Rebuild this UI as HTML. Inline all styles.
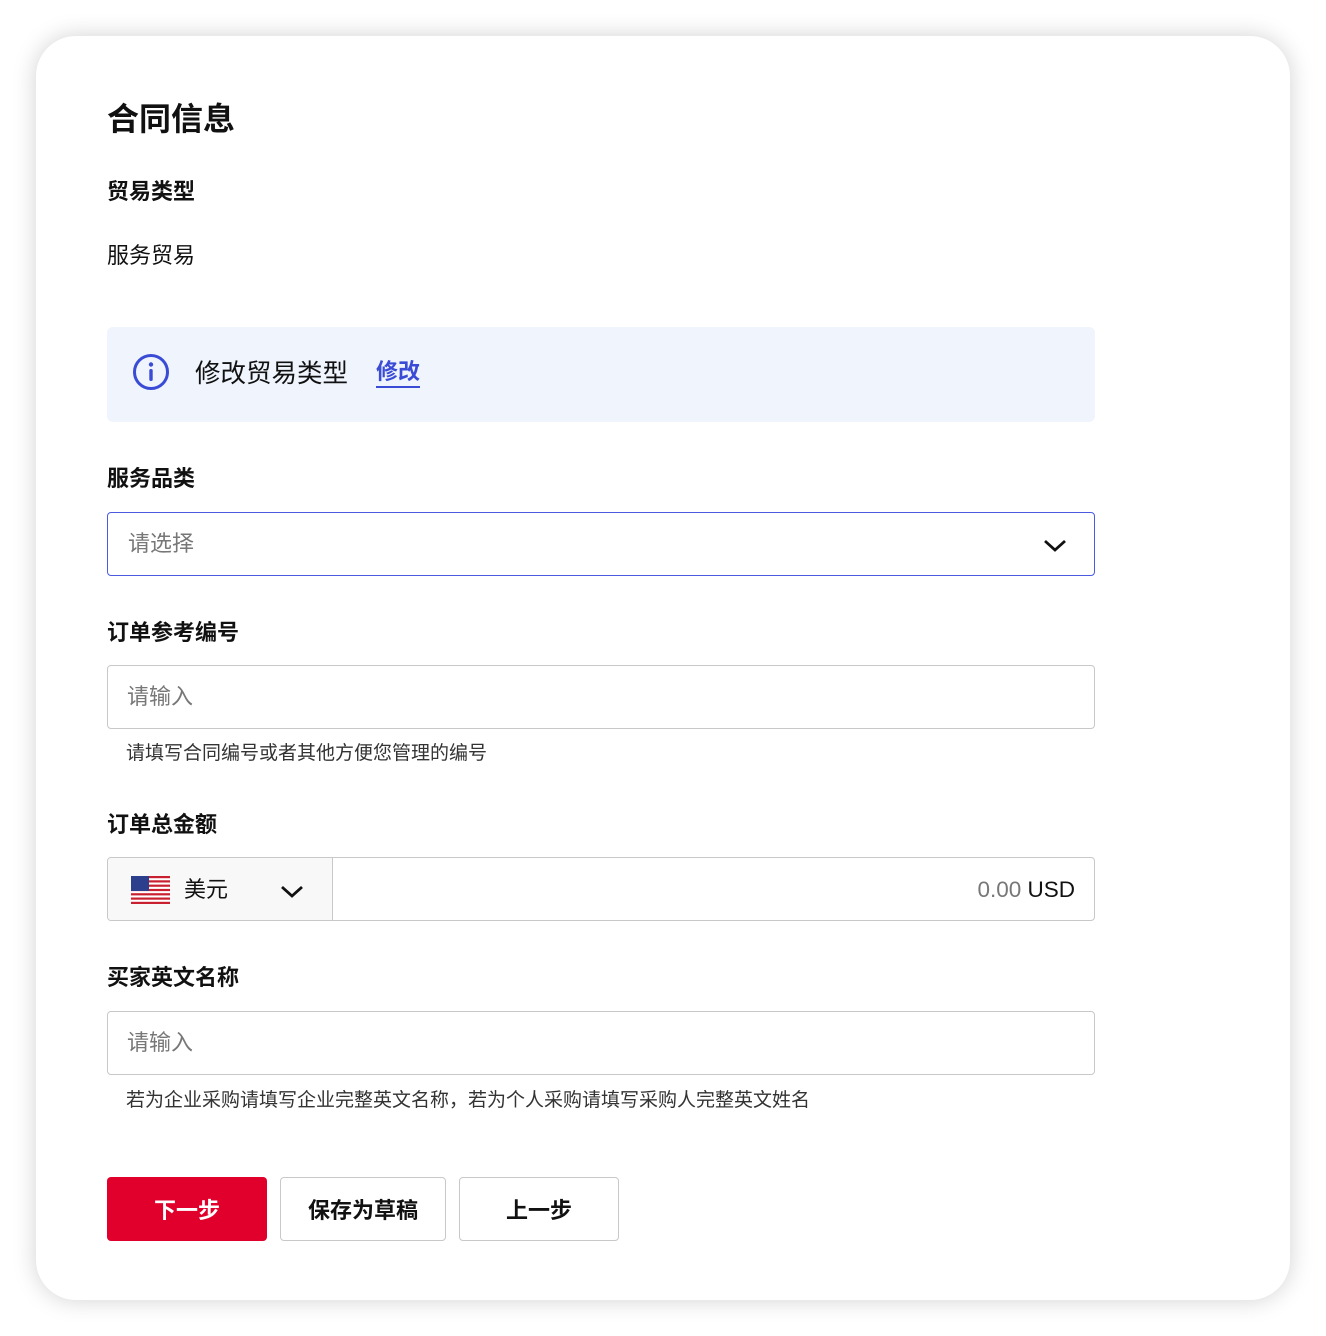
<!DOCTYPE html>
<html><head><meta charset="utf-8"><style>
*{box-sizing:border-box;margin:0;padding:0}
body{width:1326px;height:1336px;background:#fff;font-family:"Liberation Sans","Noto Sans CJK SC",sans-serif;color:#111;position:relative;overflow:hidden}
.card{position:absolute;left:36px;top:36px;width:1254px;height:1264px;background:#fff;border-radius:40px;box-shadow:0 0 24px rgba(0,0,0,.18)}
.a{position:absolute;white-space:nowrap;line-height:1}
.lbl{font-size:22px;font-weight:bold;color:#111}
.box{position:absolute;left:107px;width:988px;height:64px;border:1px solid #c8c8c8;border-radius:4px;background:#fff}
.ph{position:absolute;left:19px;top:20px;font-size:22px;color:#777;line-height:1;white-space:nowrap}
.hint{font-size:19px;color:#333}
.btn{position:absolute;top:1177px;height:64px;border-radius:4px;font-size:22px;font-weight:bold;display:flex;align-items:center;justify-content:center}
</style></head><body>
<div class="card"></div>
<div class="a" style="left:107px;top:103px;font-size:32px;font-weight:bold">合同信息</div>
<div class="a lbl" style="left:107px;top:181px">贸易类型</div>
<div class="a" style="left:107px;top:245px;font-size:22px">服务贸易</div>
<div style="position:absolute;left:107px;top:327px;width:988px;height:95px;background:#eff4fd;border-radius:6px">
<svg style="position:absolute;left:25px;top:26px" width="38" height="38" viewBox="0 0 38 38"><circle cx="19" cy="19" r="16.5" fill="none" stroke="#3a4bd6" stroke-width="3"/><circle cx="19" cy="11.5" r="2.2" fill="#3a4bd6"/><rect x="17.3" y="16" width="3.4" height="12" rx="1.5" fill="#3a4bd6"/></svg>
<div class="a" style="left:88px;top:35px;font-size:25.5px;color:#111">修改贸易类型</div>
<div class="a" style="left:269px;top:34px;font-size:22px;font-weight:bold;color:#3a4bd6;border-bottom:2px solid #3a4bd6;padding-bottom:3px">修改</div>
</div>
<div class="a lbl" style="left:107px;top:468px">服务品类</div>
<div class="box" style="top:512px;border-color:#4a5be0"><div class="ph" style="left:20px">请选择</div>
<svg style="position:absolute;left:935px;top:25px" width="24" height="16" viewBox="0 0 24 16"><path d="M2 3l10 9 10-9" fill="none" stroke="#111" stroke-width="2.8"/></svg></div>
<div class="a lbl" style="left:107px;top:622px">订单参考编号</div>
<div class="box" style="top:665px"><div class="ph">请输入</div></div>
<div class="a hint" style="left:126px;top:744px">请填写合同编号或者其他方便您管理的编号</div>
<div class="a lbl" style="left:107px;top:814px">订单总金额</div>
<div class="box" style="top:857px;overflow:hidden">
<div style="position:absolute;left:0;top:0;width:225px;height:62px;background:#f8f8f8;border-right:1px solid #c8c8c8"></div>
<svg style="position:absolute;left:23px;top:18px" width="39" height="28" viewBox="0 0 39 28"><rect width="39" height="28" rx="3" fill="#fff"/><g fill="#c8202f"><rect y="0" width="39" height="2.2"/><rect y="4.3" width="39" height="2.2"/><rect y="8.6" width="39" height="2.2"/><rect y="12.9" width="39" height="2.2"/><rect y="17.2" width="39" height="2.2"/><rect y="21.5" width="39" height="2.2"/><rect y="25.8" width="39" height="2.2"/></g><rect width="18" height="15" fill="#2b3f8c"/></svg>
<div class="a" style="left:76px;top:21px;font-size:22px">美元</div>
<svg style="position:absolute;left:172px;top:26px" width="24" height="16" viewBox="0 0 24 16"><path d="M2 3l10 9 10-9" fill="none" stroke="#111" stroke-width="2.8"/></svg>
<div class="a" style="right:19px;top:21px;font-size:22.5px"><span style="color:#777">0.00</span> USD</div>
</div>
<div class="a lbl" style="left:107px;top:967px">买家英文名称</div>
<div class="box" style="top:1011px"><div class="ph">请输入</div></div>
<div class="a hint" style="left:126px;top:1091px">若为企业采购请填写企业完整英文名称，若为个人采购请填写采购人完整英文姓名</div>
<div class="btn" style="left:107px;width:160px;background:#e0002b;color:#fff">下一步</div>
<div class="btn" style="left:280px;width:166px;border:1px solid #c8c8c8;color:#111">保存为草稿</div>
<div class="btn" style="left:459px;width:160px;border:1px solid #c8c8c8;color:#111">上一步</div>
</body></html>
